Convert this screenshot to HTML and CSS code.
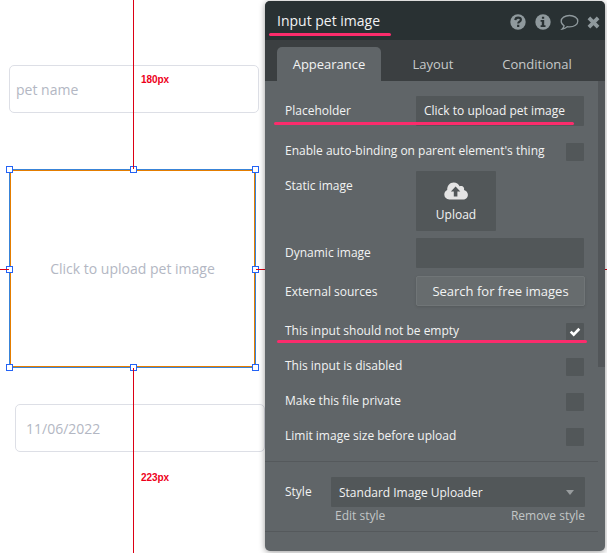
FILE: index.html
```
<!DOCTYPE html>
<html lang="en">
<head>
<meta charset="utf-8">
<title>Input pet image</title>
<link rel="stylesheet" href="styles.css">
</head>
<body>
<main class="canvas">
  <div class="field name-field">pet name</div>
  <div class="uploader">Click to upload pet image</div>
  <div class="field date-field">11/06/2022</div>

  <i class="handle left top"></i><i class="handle center top"></i><i class="handle right top"></i>
  <i class="handle left middle"></i><i class="handle right middle"></i>
  <i class="handle left bottom"></i><i class="handle center bottom"></i><i class="handle right bottom"></i>
  <i class="guide guide-top"></i><i class="guide guide-bottom"></i>
  <i class="guide guide-left"></i><i class="guide guide-right"></i>
  <span class="distance distance-top">180px</span>
  <span class="distance distance-bottom">223px</span>

  <section class="panel">
    <header class="header">
      <h1 class="title">Input pet image</h1>
      <svg class="icon" width="16" height="16" viewBox="0 0 16 16"><circle cx="8" cy="8" r="7.7" fill="#8f999d"/><path d="M5.3 6.1C5.4 4.4 6.5 3.6 8.1 3.6c1.7 0 2.8.9 2.8 2.2C10.900 7.700 8.200 7.700 8.200 9.600" fill="none" stroke="#293133" stroke-width="2.1"/><path d="M7.100 10.700h2.200v2.200H7.100z" fill="#293133"/></svg>
      <svg class="icon" width="16" height="16" viewBox="0 0 16 16"><circle cx="8" cy="8" r="7.700" fill="#8f999d"/><path d="M6.900 2.700h2.300v2.100H6.900zM5.600 6.100h3.600v5.100h1.300v1.700H5.600v-1.700h1.200V7.800H5.600z" fill="#293133"/></svg>
      <svg class="icon chat" width="19" height="17" viewBox="0 0 19 17"><path d="M9.500 1.500c4.700 0 8.300 2.500 8.300 5.700s-3.600 5.700-8.300 5.700c-.8 0-1.600-.1-2.300-.2-1.400 1.300-3 2-4.900 2.300 1-.9 1.600-1.900 1.800-3.300C2.300 10.600 1.200 9 1.200 7.200c0-3.200 3.600-5.700 8.300-5.700z" fill="none" stroke="#8f999d" stroke-width="1.300"/></svg>
      <svg class="icon" width="13" height="13" viewBox="0 0 13 13"><path d="M1.900 1.900l9.200 9.200M11.100 1.900l-9.200 9.200" stroke="#8f999d" stroke-width="3.700"/></svg>
    </header>
    <nav class="tabs">
      <span class="tab active">Appearance</span>
      <span class="tab">Layout</span>
      <span class="tab">Conditional</span>
    </nav>
    <div class="body">
      <div class="row"><label class="label placeholder-label">Placeholder</label><div class="input">Click to upload pet image</div></div>
      <div class="row check-first"><label class="label">Enable auto-binding on parent element's thing</label><i class="check"></i></div>
      <div class="row static-row"><label class="label static-label">Static image</label>
        <div class="upload">
          <svg width="24" height="18" viewBox="0 0 24 18"><path d="M5.300 17.500A5 5 0 0 1 .3 12.500c0-2 1.200-3.600 2.900-4.500C3 3.700 5.700.4 9.700.4c2.700 0 4.900 1.600 5.900 3.900 2.500-1.300 5.300.7 4.400 3.600 2.300.6 3.900 2.500 3.900 4.800 0 2.700-2.100 4.800-4.800 4.800z" fill="#e4e4e4"/><path d="M11.600 4.600l4.700 5h-2.900v5H9.800v-5H6.900z" fill="#525759"/></svg>
          <span>Upload</span>
        </div>
      </div>
      <div class="row dynamic-row"><label class="label dynamic-label">Dynamic image</label><div class="input"></div></div>
      <div class="row source-row"><label class="label source-label">External sources</label><div class="search">Search for free images</div></div>
      <div class="row check-row"><label class="label">This input should not be empty</label><i class="check"><svg width="18" height="18" viewBox="0 0 18 18"><path d="M4.700 8.600l3 3L13.300 5.800" fill="none" stroke="#fff" stroke-width="2.700"/></svg></i></div>
      <div class="row check-row"><label class="label">This input is disabled</label><i class="check"></i></div>
      <div class="row check-row"><label class="label">Make this file private</label><i class="check"></i></div>
      <div class="row check-row"><label class="label">Limit image size before upload</label><i class="check"></i></div>
      <div class="style-section">
        <div class="row"><label class="label style-label">Style</label><div class="select"><span>Standard Image Uploader</span><i class="caret"></i></div></div>
        <div class="links"><span>Edit style</span><span>Remove style</span></div>
      </div>
      <i class="scrollbar"></i>
    </div>
  </section>
  <i class="mark mark-title"></i><i class="mark mark-placeholder"></i><i class="mark mark-required"></i>
</main>
</body>
</html>
```
FILE: styles.css
```
* { box-sizing: border-box; }
body { margin: 0; background: #fff; font-family: "Open Sans", "Noto Sans", sans-serif; }
i { font-style: normal; }
.canvas { position: relative; width: 607px; height: 553px; overflow: hidden; }

.field { position: absolute; display: flex; align-items: center; width: 250px; height: 48px; border: 1px solid #dddfe6; border-radius: 5px; color: #b3b7c3; font-size: 14px; }
.name-field { left: 9px; top: 65px; padding-left: 6px; }
.date-field { left: 15px; top: 404px; padding-left: 10px; }
.uploader { position: absolute; left: 9px; top: 169px; width: 247px; height: 199px; display: flex; align-items: center; justify-content: center; border: 1px solid #3984d8; box-shadow: inset 0 0 0 1px #e47d00; color: #b3b7c3; font-size: 14px; }
.handle { position: absolute; width: 7px; height: 7px; border: 1px solid #2463f5; background: #fff; }
.left { left: 6px; } .center { left: 130px; } .right { left: 252px; }
.top { top: 166px; } .middle { top: 266px; } .bottom { top: 364px; }
.guide { position: absolute; background: #dc0014; }
.guide-top { left: 133px; top: 0; width: 1px; height: 169px; }
.guide-bottom { left: 133px; top: 368px; width: 1px; height: 185px; }
.guide-left { left: 0; top: 269px; width: 9px; height: 1px; }
.guide-right { left: 256px; top: 269px; width: 351px; height: 1px; }
.distance { position: absolute; left: 141px; color: #ed001b; font: bold 10px/12px "Liberation Sans", sans-serif; letter-spacing: -.1px; }
.distance-top { top: 74px; }
.distance-bottom { top: 472px; }

.panel { position: absolute; left: 265px; top: 1px; width: 340px; height: 550px; border-radius: 5px; overflow: hidden; background: #606568; color: #f2f3f3; font-size: 12px; box-shadow: 0 1px 6px rgba(0,0,0,.4); }
.header { display: flex; align-items: center; height: 39px; padding: 3px 5px 0 12px; background: #293133; }
.title { flex: 1; margin: -2px 0 0; font-size: 14px; font-weight: 400; line-height: 20px; }
.icon { margin-right: 9px; flex: none; }
.chat { margin-right: 8px; }
.icon:last-child { margin-right: 0; }
.tabs { display: flex; height: 41px; padding: 7px 0 0 12px; background: #3b3f41; color: #c7caca; font-size: 13px; line-height: 34px; }
.tab { width: 104px; text-align: center; }
.active { border-radius: 5px 5px 0 0; background: #606568; color: #f2f3f3; }

.body { position: relative; height: 470px; padding: 15px 20px 0; }
.row { display: flex; justify-content: space-between; align-items: flex-start; width: 299px; }
.label { line-height: 18px; margin-top: -1px; white-space: nowrap; }
.input { width: 168px; height: 30px; background: #525759; border-radius: 1px; line-height: 30px; padding-left: 8px; white-space: nowrap; }
.placeholder-label { margin-top: 6px; }
.check { width: 18px; height: 18px; background: #525759; border-radius: 1px; }
.check svg { display: block; }
.check-first { margin-top: 17px; }
.static-row { margin-top: 10px; }
.static-label { margin-top: 6px; }
.upload { display: flex; flex-direction: column; align-items: center; width: 80px; height: 60px; margin-right: 88px; padding-top: 11px; background: #525759; border-radius: 1px; }
.upload span { line-height: 18px; margin-top: 6px; }
.dynamic-row { margin-top: 7px; }
.dynamic-label { margin-top: 6px; }
.source-row { width: 300px; margin-top: 8px; }
.source-label { margin-top: 7px; }
.search { width: 169px; height: 30px; border: 1px solid #707577; border-radius: 2px; background: #676c6e; line-height: 28px; text-align: center; font-size: 13px; box-shadow: 0 1px 3px rgba(0,0,0,.12); white-space: nowrap; }
.check-row { margin-top: 17px; }
.style-section { margin: 15px -13px 0 -20px; height: 71px; padding: 15px 0 0 20px; border-top: 1px solid #55595c; border-bottom: 1px solid #55595c; }
.style-section .row { width: 300px; }
.style-label { margin-top: 6px; }
.select { display: flex; justify-content: space-between; align-items: center; width: 254px; height: 30px; padding: 0 11px 0 8px; background: #525759; border-radius: 1px; }
.caret { border: 4px solid transparent; border-top: 5px solid #989c9e; border-bottom: 0; }
.links { display: flex; justify-content: space-between; width: 300px; padding-left: 50px; color: #c2c5c6; line-height: 18px; }
.scrollbar { position: absolute; right: 0; top: 0; width: 7px; height: 286px; background: #525659; }

.mark { position: absolute; height: 3px; border-radius: 2px; background: #fb2c6c; }
.mark-title { left: 269px; top: 33px; width: 122px; }
.mark-placeholder { left: 274px; top: 122px; width: 300px; }
.mark-required { left: 277px; top: 340px; width: 310px; }
```
